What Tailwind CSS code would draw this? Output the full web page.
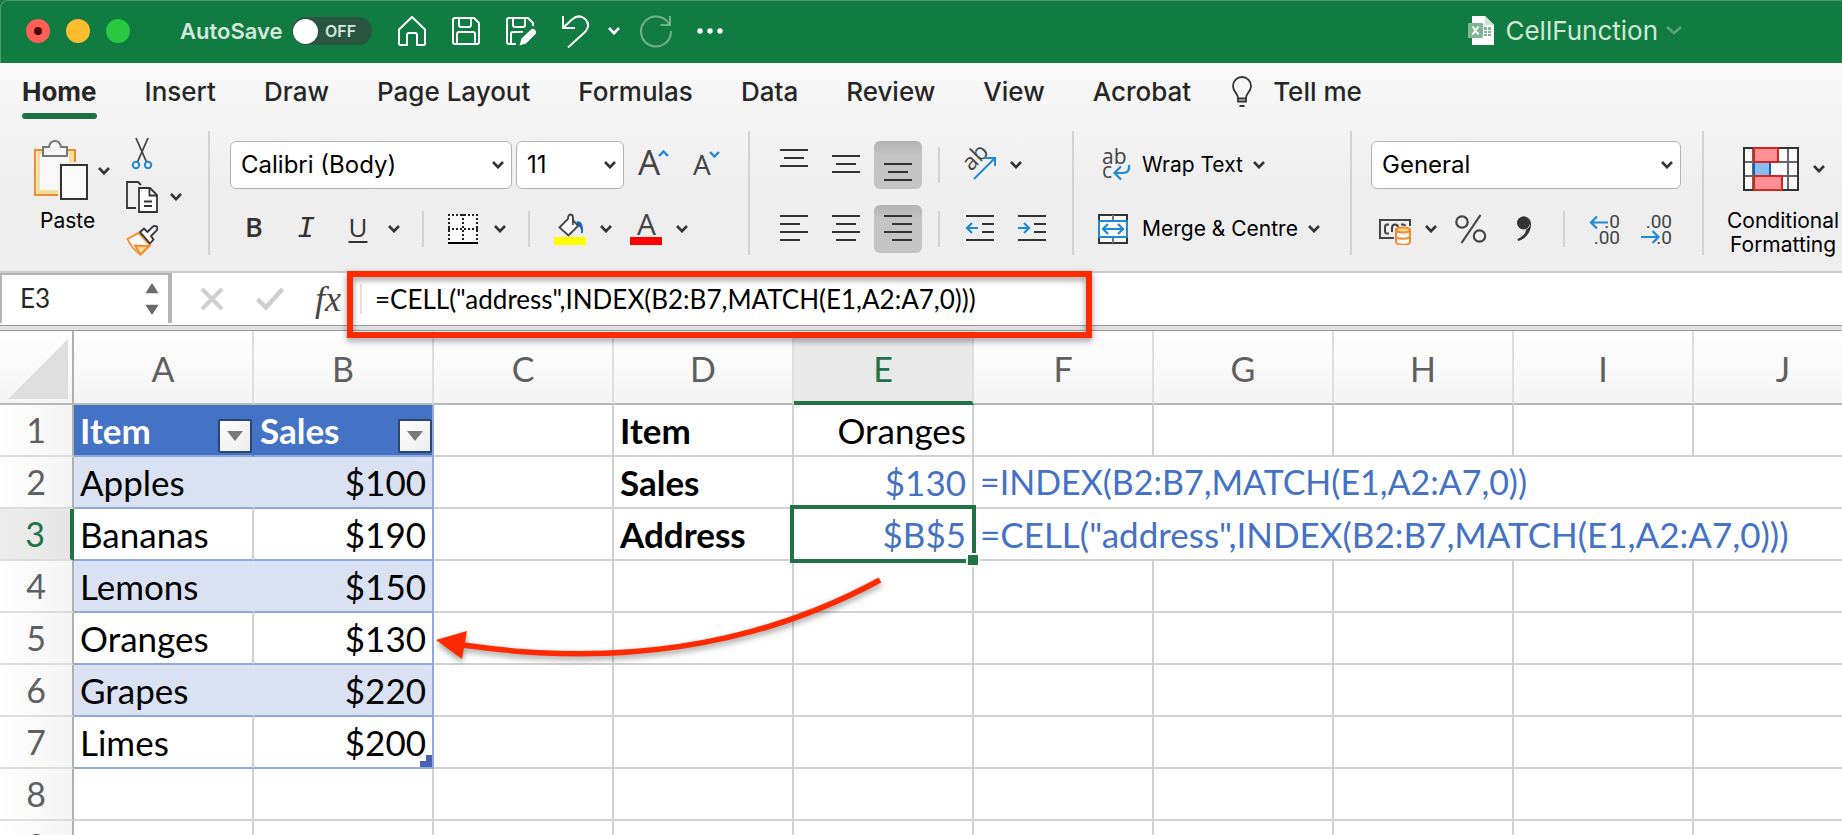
<!DOCTYPE html>
<html lang="en">
<head>
<meta charset="utf-8">
<title>CellFunction</title>
<script src="https://cdn.jsdelivr.net/npm/@tailwindcss/browser@4"></script>
</head>
<body class="flex h-screen flex-col overflow-hidden bg-white font-[Inter,sans-serif] text-[#262626]">

<svg class="hidden" aria-hidden="true">
  <symbol id="chev" viewBox="0 0 12 8"><path d="M1 1 6 6.2 11 1" fill="none" stroke="currentColor" stroke-width="2.6"/></symbol>
</svg>

<!-- Title bar -->
<header class="h-[63px] shrink-0 bg-[#107c41]">
  <div class="flex h-full items-center rounded-tl-lg border-t border-l border-[#4f9b70] pb-0.5 pl-[25px]">
    <div class="flex gap-4">
      <button aria-label="Close" class="flex size-6 items-center justify-center rounded-full bg-[#ff5f57]"><span class="size-2 rounded-full bg-[#4d0000]"></span></button>
      <button aria-label="Minimise" class="size-6 rounded-full bg-[#febc2e]"></button>
      <button aria-label="Zoom" class="size-6 rounded-full bg-[#28c840]"></button>
    </div>
    <label for="autosave" class="ml-[50px] w-[100px] text-[22px] leading-7 font-semibold whitespace-nowrap text-[#d6e8dd]">AutoSave</label>
    <button id="autosave" role="switch" aria-checked="false" class="ml-3 flex h-7 w-20 items-center gap-[7px] rounded-full bg-[#2a5540] px-px text-[16px] font-semibold text-[#d6e8dd]"><span class="size-[25px] rounded-full bg-white"></span>OFF</button>
    <div class="ml-6 flex items-center text-white">
      <button aria-label="Home"><svg class="h-8 w-8" viewBox="0 0 32 32" fill="none" stroke="currentColor" stroke-width="2"><path d="M3 14.5 16 2 29 14.500V28.500Q29 30 27.500 30H21V20q0-2-2-2h-6q-2 0-2 2v10H4.500Q3 30 3 28.500Z" stroke-linejoin="round"/></svg></button>
      <button aria-label="Save" class="ml-[22px]"><svg class="h-8 w-8" viewBox="0 0 32 32" fill="none" stroke="currentColor" stroke-width="2" stroke-linejoin="round"><path d="M5 3H24L29 8V27q0 2-2 2H5q-2 0-2-2V5q0-2 2-2ZM9 3v7q0 2 2 2h8q2 0 2-2V3M7 29V19q0-2 2-2h14q2 0 2 2v10"/></svg></button>
      <button aria-label="Save as" class="ml-[22px]"><svg class="h-8 w-8" viewBox="0 0 32 32" fill="none" stroke="currentColor" stroke-width="2" stroke-linejoin="round"><path d="M12 29H5q-2 0-2-2V5q0-2 2-2H24L29 8v3M9 3v7q0 2 2 2h8q2 0 2-2V3M7 29V19q0-2 2-2h10"/><path d="m15.500 30.500 2-7L27 14.500q2-1.500 4 .5t.5 4L22 28.500Z" fill="currentColor" stroke="none"/></svg></button>
      <button aria-label="Undo" class="ml-6"><svg class="h-9 w-8" viewBox="0 0 32 36" fill="none" stroke="currentColor" stroke-width="2"><path d="M3 3v12h12M3.500 14.500 12 6.500Q19 .5 25 6t.5 12.500L8 34.500"/></svg></button>
      <button aria-label="Undo history" class="ml-4"><svg class="h-2 w-3"><use href="#chev"/></svg></button>
      <button aria-label="Redo" class="ml-[18px] text-[#74b08d]"><svg class="h-9 w-9" viewBox="0 0 36 36" fill="none" stroke="currentColor" stroke-width="2"><path d="M32 3v9H22.500M31 11A15 15 0 1 0 33 18"/></svg></button>
      <button aria-label="More" class="ml-[22px]"><svg class="h-6 w-7" viewBox="0 0 28 24" fill="currentColor"><circle cx="4" cy="12" r="2.700"/><circle cx="14" cy="12" r="2.700"/><circle cx="24" cy="12" r="2.700"/></svg></button>
    </div>
    <div class="mr-[160px] ml-auto flex items-center">
      <svg class="h-[30px] w-[27px]" viewBox="0 0 27 30"><path d="M4 0h13l9 9v20H4Z" fill="#fff"/><path d="M17 0v9h9Z" fill="#cfe3d6"/><path d="M16 11h3v3h-3Zm4 0h3v3h-3Zm-4 4h3v2h-3Zm4 0h3v2h-3Zm-4 3h3v2h-3Zm4 0h3v2h-3Z" fill="#7fb596"/><rect y="7" width="15" height="15" rx="1" fill="#7db493"/><path d="m4.500 10.500 6 8m0-8-6 8" stroke="#fff" stroke-width="2"/></svg>
      <h1 class="ml-[10px] text-[26px] leading-8 text-[#d3e6da]">CellFunction</h1>
      <svg class="ml-2 h-3 w-4 text-[#5fa37d]" viewBox="0 0 16 12"><path d="m1 2 7 6 7-6" fill="none" stroke="currentColor" stroke-width="2.500"/></svg>
    </div>
  </div>
</header>

<!-- Ribbon -->
<div class="shrink-0 bg-linear-to-b from-[#f9f9f9] to-[#eeeeee] to-60%">
  <nav class="flex h-[68px] items-start gap-12 pt-[11px] pl-[22px] text-[26px] leading-9 font-medium whitespace-nowrap">
    <a href="#" class="font-bold"><span class="block">Home</span><span class="mt-[3px] block h-1.5 rounded-full bg-[#1e7145]"></span></a>
    <a href="#">Insert</a>
    <a href="#">Draw</a>
    <a href="#">Page Layout</a>
    <a href="#">Formulas</a>
    <a href="#">Data</a>
    <a href="#">Review</a>
    <a href="#">View</a>
    <a href="#">Acrobat</a>
    <a href="#" class="flex items-center gap-5"><svg class="-ml-2 h-8 w-[22px]" viewBox="0 0 22 32" fill="none" stroke="#333" stroke-width="1.800"><path d="M7 22c0-5-5-6-5-12a9 9 0 0 1 18 0c0 6-5 7-5 12v3.500H7ZM7 22.500h8M8.500 30h5"/></svg>Tell me</a>
  </nav>

  <div class="flex h-[140px] items-start text-black">
    <!-- Clipboard -->
    <section aria-label="Clipboard" class="flex h-[124px] w-[210px] shrink-0 border-r-2 border-[#d2d2d2]">
      <div class="ml-[34px] flex w-[78px] flex-col">
        <button class="mt-2 flex items-center gap-2.5 text-[#333]" aria-label="Paste">
          <svg class="h-[64px] w-[54px]" viewBox="0 0 54 64" fill="none"><path d="M3 12h38v45H3Z" fill="#fbdc95"/><path d="M6 15h29v36H6Z" fill="#f8f8f8"/><path d="M41 24V11H1v45h24" stroke="#f28b30" stroke-width="2"/><path d="M9 8h6q1-6 6-6t6 6h6v9H9Z" fill="#f6f6f6" stroke="#777" stroke-width="2"/><path d="M24 23h32v38H24Z" fill="#f0f0f0"/><path d="M27 26h26v34H27Z" fill="#fafafa" stroke="#333" stroke-width="2"/></svg>
          <svg class="h-2 w-3 shrink-0"><use href="#chev"/></svg>
        </button>
        <span class="ml-1.5 text-[21px] leading-9">Paste</span>
      </div>
      <div class="ml-3.5 flex flex-col gap-3 pt-1.5 text-[#333]">
        <button aria-label="Cut" class="w-8"><svg class="h-8 w-8" viewBox="0 0 32 32" fill="none" stroke-width="2"><path d="M10 1 20.500 25M22 1 11.500 25" stroke="#444" stroke-width="1.800"/><circle cx="10" cy="28" r="3.200" stroke="#1f8ad2"/><circle cx="22" cy="28" r="3.200" stroke="#1f8ad2"/></svg></button>
        <button aria-label="Copy" class="flex items-center gap-3"><svg class="h-8 w-8" viewBox="0 0 32 32" fill="none" stroke="#333" stroke-width="1.800"><path d="M10 27H1V1h11l3 3"/><path d="M13 7h11l7 7v17H13Z" fill="#fafafa"/><path d="M23.500 7v7.500H31M18 20.500h8M18 25h8"/></svg><svg class="h-2 w-3"><use href="#chev"/></svg></button>
        <button aria-label="Format painter" class="w-8"><svg class="h-8 w-8" viewBox="0 0 32 32" fill="none" stroke-width="1.800"><path d="m1.500 14 11-6L24 20.500 14.500 29.500Q6 24 1.500 14Z" fill="#fafafa" stroke="#f28b30"/><path d="M9 20.500 23 21l-8.500 8.500Z" fill="#fbdc95" stroke="#f28b30"/><path d="m14 7 4-3.500 3.500 3.500L27 1.500q2-1.200 3.500 0t.5 3.500l-6 6 2.500 3.500L24 18.500Z" fill="#fafafa" stroke="#333"/></svg></button>
      </div>
    </section>

    <!-- Font -->
    <section aria-label="Font" class="flex h-[124px] w-[540px] shrink-0 flex-col gap-4 border-r-2 border-[#d2d2d2] pt-2.5 pl-5 text-[#333]">
      <div class="flex h-12 items-center gap-1">
        <div class="relative w-[282px]">
          <select aria-label="Font name" class="h-12 w-full appearance-none rounded-md border border-[#b4b4b4] bg-white pl-2.5 text-[24px] text-black"><option>Calibri (Body)</option></select>
          <svg class="pointer-events-none absolute top-5 right-2 h-2 w-3"><use href="#chev"/></svg>
        </div>
        <div class="relative w-[108px]">
          <select aria-label="Font size" class="h-12 w-full appearance-none rounded-md border border-[#b4b4b4] bg-white pl-2.5 text-[24px] text-black"><option>11</option></select>
          <svg class="pointer-events-none absolute top-5 right-2 h-2 w-3"><use href="#chev"/></svg>
        </div>
        <button aria-label="Increase font size" class="ml-2"><svg class="h-12 w-9 overflow-visible" viewBox="0 0 36 48"><text x="2" y="34" font-family="Open Sans" font-size="35" fill="#444">A</text><path d="m23 15 4.500-4.500L32 15" fill="none" stroke="#1f8ad2" stroke-width="2.400"/></svg></button>
        <button aria-label="Decrease font size" class="ml-3.5"><svg class="h-12 w-9 overflow-visible" viewBox="0 0 36 48"><text x="3" y="34" font-family="Open Sans" font-size="28" fill="#444">A</text><path d="m20 11 4.500 4.500L29 11" fill="none" stroke="#1f8ad2" stroke-width="2.400"/></svg></button>
      </div>
      <div class="flex h-12 items-center pl-2">
        <button class="w-8 pb-1 font-['Open_Sans'] text-[27px] leading-8 font-semibold">B</button>
        <button class="ml-5 w-8 font-['Liberation_Mono'] text-[30px] leading-8 italic">I</button>
        <button class="ml-5 w-8 pb-1 font-['Open_Sans'] text-[26px] leading-8 underline decoration-2 underline-offset-4">U</button>
        <svg class="ml-3.5 h-2 w-3"><use href="#chev"/></svg>
        <div class="ml-[22px] h-9 w-0.5 bg-[#d2d2d2]"></div>
        <button aria-label="Borders" class="ml-6"><svg class="h-[30px] w-[30px]" viewBox="0 0 30 30" fill="none" stroke="#222" stroke-width="2"><path d="M0 0h30v28H0Z" fill="#fafafa" stroke="none"/><path d="M0 1h30M0 15h30M1 0v28M15 0v28M29 0v28" stroke-dasharray="2 2"/><path d="M0 29h30" stroke="#000"/></svg></button>
        <svg class="ml-4 h-2 w-3"><use href="#chev"/></svg>
        <div class="ml-[22px] h-9 w-0.5 bg-[#d2d2d2]"></div>
        <button aria-label="Fill colour" class="ml-6"><svg class="h-8 w-8" viewBox="0 0 32 32" fill="none"><path d="M22.500 8.500q7-2 6.500 11l-2 1q1-7-4-8Z" fill="#1565c0"/><path d="M5.500 14.500 14 6q0-4.500 2.500-4.500T19 5v2l5 6-9.500 9.500Z" fill="#fafafa" stroke="#444" stroke-width="1.800"/><path d="M19 5v7" stroke="#444" stroke-width="1.800"/><path d="M0 24h32v8H0Z" fill="#ff0"/></svg></button>
        <svg class="ml-3.5 h-2 w-3"><use href="#chev"/></svg>
        <button aria-label="Font colour" class="ml-[18px]"><svg class="h-8 w-8 overflow-visible" viewBox="0 0 32 32"><text x="7" y="22" font-family="Open Sans" font-size="30" fill="#444">A</text><path d="M0 24h32v8H0Z" fill="#f00"/></svg></button>
        <svg class="ml-3.5 h-2 w-3"><use href="#chev"/></svg>
      </div>
    </section>

    <!-- Alignment -->
    <section aria-label="Alignment" class="flex h-[124px] w-[324px] shrink-0 flex-col gap-4 border-r-2 border-[#d2d2d2] pt-2.5 pl-5 text-[#333]">
      <div class="flex h-12 items-center gap-1">
        <button aria-label="Top align" class="rounded-md"><svg class="size-12" viewBox="0 0 48 48" stroke="#333" stroke-width="2"><path d="M10 9h28M14 17h20M10 25h28"/></svg></button>
        <button aria-label="Middle align" class="rounded-md"><svg class="size-12" viewBox="0 0 48 48" stroke="#333" stroke-width="2"><path d="M10 15h28M14 23h20M10 31h28"/></svg></button>
        <button aria-label="Bottom align" aria-pressed="true" class="rounded-md bg-linear-to-b from-[#b2b2b2] to-[#c4c4c4] to-30%"><svg class="size-12" viewBox="0 0 48 48" stroke="#333" stroke-width="2"><path d="M10 23h28M14 31h20M10 39h28"/></svg></button>
        <div class="mx-3 h-9 w-0.5 bg-[#d2d2d2]"></div>
        <button aria-label="Orientation"><svg class="size-12 overflow-visible" viewBox="0 0 48 48"><text x="0" y="0" font-family="Open Sans" font-size="23" fill="#444" transform="translate(15 31) rotate(-45)">ab</text><path d="m18 38 20-20M28 17h11v8" fill="none" stroke="#1f8ad2" stroke-width="2"/></svg></button>
        <svg class="ml-0.5 h-2 w-3"><use href="#chev"/></svg>
      </div>
      <div class="flex h-12 items-center gap-1">
        <button aria-label="Align left" class="rounded-md"><svg class="size-12" viewBox="0 0 48 48" stroke="#333" stroke-width="2"><path d="M10 11h28M10 19h20M10 27h28M10 35h20"/></svg></button>
        <button aria-label="Centre" class="rounded-md"><svg class="size-12" viewBox="0 0 48 48" stroke="#333" stroke-width="2"><path d="M10 11h28M14 19h20M10 27h28M14 35h20"/></svg></button>
        <button aria-label="Align right" aria-pressed="true" class="rounded-md bg-linear-to-b from-[#b2b2b2] to-[#c4c4c4] to-30%"><svg class="size-12" viewBox="0 0 48 48" stroke="#333" stroke-width="2"><path d="M10 11h28M18 19h20M10 27h28M18 35h20"/></svg></button>
        <div class="mx-3 h-9 w-0.5 bg-[#d2d2d2]"></div>
        <button aria-label="Decrease indent"><svg class="size-12" viewBox="0 0 48 48" fill="none" stroke="#333" stroke-width="2"><path d="M10 11h28M26 19h12M26 27h12M10 35h28"/><path d="M22 23H11.500M16 18l-5 5 5 5" stroke="#1f8ad2" stroke-width="2.200"/></svg></button>
        <button aria-label="Increase indent"><svg class="size-12" viewBox="0 0 48 48" fill="none" stroke="#333" stroke-width="2"><path d="M10 11h28M26 19h12M26 27h12M10 35h28"/><path d="M10 23h10.500M16 18l5 5-5 5" stroke="#1f8ad2" stroke-width="2.200"/></svg></button>
      </div>
    </section>

    <!-- Wrap and merge -->
    <section aria-label="Wrap and merge" class="flex h-[124px] w-[278px] shrink-0 flex-col gap-4 border-r-2 border-[#d2d2d2] pt-2.5 pl-6 text-[21px] whitespace-nowrap">
      <button class="flex h-12 items-center"><svg class="mr-2.5 h-9 w-[34px] overflow-visible" viewBox="0 0 34 36"><text x="4" y="17" font-family="Open Sans" font-size="21" fill="#444">ab</text><text x="4" y="31" font-family="Open Sans" font-size="21" fill="#444">c</text><path d="M31 18q1 8-6 8h-8M23 19.500 16.500 26l6.500 6.500" fill="none" stroke="#1f8ad2" stroke-width="2.200"/></svg>Wrap Text<svg class="ml-2.5 h-2 w-3 text-[#333]"><use href="#chev"/></svg></button>
      <button class="flex h-12 items-center"><svg class="mr-3.5 h-[30px] w-[30px]" viewBox="0 0 30 30" fill="none" stroke="#333" stroke-width="2"><path d="M1 1h28v28H1Z" fill="#fafafa"/><path d="M15 1v28" stroke="#777"/><path d="M1 7h28v16H1Z" fill="#fafafa" stroke="#1f8ad2"/><path d="M5 15h20M10 10l-5 5 5 5M20 10l5 5-5 5" stroke="#1f8ad2" stroke-width="2.200"/></svg>Merge &amp; Centre<svg class="ml-2.5 h-2 w-3 text-[#333]"><use href="#chev"/></svg></button>
    </section>

    <!-- Number -->
    <section aria-label="Number" class="flex h-[124px] w-[352px] shrink-0 flex-col gap-4 border-r-2 border-[#d2d2d2] pt-2.5 pl-[19px] text-[#333]">
      <div class="relative w-[310px]">
        <select aria-label="Number format" class="h-12 w-full appearance-none rounded-md border border-[#b4b4b4] bg-white pl-2.5 text-[24px] text-black"><option>General</option></select>
        <svg class="pointer-events-none absolute top-5 right-2 h-2 w-3"><use href="#chev"/></svg>
      </div>
      <div class="flex h-12 items-center pl-2">
        <button aria-label="Currency"><svg class="h-8 w-8" viewBox="0 0 32 32" fill="none" stroke="#444" stroke-width="2"><path d="M15 25H1V7h30v6"/><path d="M10 11.500H8Q6 11.500 6 14v4q0 2.500 2 2.500h2M13 19v-4q0-3.500 3-3.500 2.500 0 3 2.500M22 11.500h2q2 0 2 1.500"/><path d="M17 17v12c0 3.500 14 3.500 14 0V17Z" fill="#fafafa" stroke="#f28b30"/><ellipse cx="24" cy="17" rx="7" ry="2.500" fill="#fbdc95" stroke="#f28b30"/><path d="M17 23c0 3.500 14 3.500 14 0" stroke="#f28b30"/></svg></button>
        <svg class="ml-3.5 h-2 w-3"><use href="#chev"/></svg>
        <button aria-label="Percent" class="ml-[18px]"><svg class="h-8 w-8" viewBox="0 0 32 32" fill="none" stroke="#444" stroke-width="2.200"><circle cx="7" cy="9" r="5.700"/><circle cx="24.500" cy="23" r="5.700"/><path d="M25.500 2 6.500 30"/></svg></button>
        <button aria-label="Comma style" class="ml-[26px]"><svg class="h-8 w-6" viewBox="0 0 24 32"><path d="M4 10a6.500 6.500 0 1 1 9 6.500C13 20 10 23.500 4.500 26l.5 2C14 25.500 18 18 18 11a7 7 0 1 0-14-1Z" fill="#333"/><circle cx="10.500" cy="10" r="6.500" fill="#333"/></svg></button>
        <div class="ml-[26px] h-9 w-0.5 bg-[#d2d2d2]"></div>
        <button aria-label="Increase decimal" class="ml-6"><svg class="h-8 w-[31px] overflow-visible" viewBox="0 0 31 32" font-family="Roboto" font-size="19" fill="#444"><text x="31" y="15" text-anchor="end">.0</text><text x="31" y="31" text-anchor="end">.00</text><path d="M19 9.500H2M8 3.500l-6 6 6 6" fill="none" stroke="#1f8ad2" stroke-width="2.200"/></svg></button>
        <button aria-label="Decrease decimal" class="ml-[21px]"><svg class="h-8 w-[31px] overflow-visible" viewBox="0 0 31 32" font-family="Roboto" font-size="19" fill="#444"><text x="31" y="15" text-anchor="end">.00</text><text x="31" y="31" text-anchor="end">.0</text><path d="M0 24h17M11.500 18l6 6-6 6" fill="none" stroke="#1f8ad2" stroke-width="2.200"/></svg></button>
      </div>
    </section>

    <!-- Styles -->
    <section aria-label="Styles" class="h-[124px] shrink-0 pt-4 pl-[23px]">
      <button class="flex flex-col text-[21px] leading-6">
        <span class="ml-4 flex items-center text-[#333]"><svg class="h-11 w-14" viewBox="0 0 56 44" fill="none" stroke-width="2"><path d="M1 1h54v42H1Z" fill="#fafafa"/><path d="M1 15h54M1 29h54M45 1v42M10 1v42" stroke="#666"/><path d="M1 1h54v42H1Z" stroke="#333"/><path d="M12 16h15v12H12Z" fill="#86bdec"/><path d="M11 15v14M27 15v14" stroke="#1060b8"/><path d="M11 1h24v14H11ZM11 29h28v14H11Z" fill="#ff9196" stroke="#d4271a"/></svg><svg class="ml-3.5 h-2 w-3"><use href="#chev"/></svg></span>
        <span class="mt-[18px] text-center whitespace-nowrap">Conditional<br>Formatting</span>
      </button>
    </section>
  </div>
</div>

<!-- Formula bar -->
<div class="relative flex h-[60px] shrink-0 flex-col border-t-2 border-[#cbcbcb] font-[Lato,sans-serif]">
  <div class="flex min-h-0 flex-1 items-start">
    <div class="flex h-[50px] w-[172px] shrink-0 items-center border-2 border-r-4 border-b-0 border-[#b4b4b4] pr-2">
      <input aria-label="Name box" value="E3" class="min-w-0 flex-1 bg-transparent pb-0.5 pl-[18px] text-[26px] text-[#262626]">
      <svg class="h-8 w-4" viewBox="0 0 14 34" fill="#6b6b6b"><path d="M0 11 7 0l7 11ZM0 23h14L7 34Z"/></svg>
    </div>
    <div class="flex h-[52px] items-center pl-7">
      <button aria-label="Cancel"><svg class="size-6" viewBox="0 0 24 24"><path d="m2 2 20 20M22 2 2 22" stroke="#cfcfcf" stroke-width="4"/></svg></button>
      <button aria-label="Enter" class="ml-8"><svg class="h-6 w-7" viewBox="0 0 28 24"><path d="m1.500 12 8.500 8.500L26.500 2" fill="none" stroke="#cfcfcf" stroke-width="4.500"/></svg></button>
      <button aria-label="Insert function" class="ml-7 w-9 text-left font-['Liberation_Serif'] text-[36px] leading-10 text-[#444] italic">&#8202;fx</button>
    </div>
    <div class="ml-3 flex h-[52px] flex-1 items-center">
      <div class="h-[30px] w-0.5 bg-[#e0e0e0]"></div>
      <input aria-label="Formula" value="=CELL(&quot;address&quot;,INDEX(B2:B7,MATCH(E1,A2:A7,0)))" class="h-10 min-w-0 flex-1 bg-transparent pl-[13px] text-[26px] text-black">
    </div>
  </div>
  <div class="h-1.5 shrink-0 border-y border-[#9a9a9a] bg-[#e2e2e2]"></div>
  <div class="pointer-events-none absolute -top-0.5 left-[347px] z-10 h-[67px] w-[745px] border-6 border-[#ff2a00] drop-shadow-[0_3px_3px_rgba(0,0,0,0.4)]"></div>
</div>

<!-- Sheet -->
<main class="relative min-h-0 flex-1 overflow-hidden font-[Lato,sans-serif]">
  <table class="w-[1874px] table-fixed border-separate border-spacing-0 text-[34px] leading-10 whitespace-nowrap text-black">
    <colgroup><col class="w-[74px]"><col span="10" class="w-[180px]"></colgroup>
    <thead class="[&_th]:border-b-2 [&_th]:p-0 [&_th]:font-normal [&_th]:text-[#5f5f5f]">
      <tr class="h-[74px] bg-linear-to-b from-white to-[#f4f4f4] [&_th]:border-r-2 [&_th]:border-r-[#dedede] [&_th]:border-b-[#b8b8b8] [&_th]:pt-[3px]">
        <th class="border-r-[#b0b0b0]!" aria-label="Select all"><svg class="ml-2 block h-15 w-15" viewBox="0 0 60 60"><path d="M60 0v60H0Z" fill="#dedede"/></svg></th>
        <th scope="col">A</th><th scope="col">B</th><th scope="col">C</th><th scope="col">D</th>
        <th scope="col" class="border-b-4! border-b-[#217346]! bg-[#e9e9e9] pt-1.5! text-[#217346]!">E</th>
        <th scope="col">F</th><th scope="col">G</th><th scope="col">H</th><th scope="col">I</th><th scope="col">J</th>
      </tr>
    </thead>
    <tbody class="[&_td]:border-r-2 [&_td]:border-b-2 [&_td]:border-[#d2d2d2] [&_td]:px-1.5 [&_td]:py-0 [&_td]:text-[35px] [&_th]:border-r-2 [&_th]:border-b-2 [&_th]:border-r-[#b0b0b0] [&_th]:border-b-[#dcdcdc] [&_th]:bg-linear-to-r [&_th]:from-white [&_th]:to-[#f4f4f4] [&_th]:p-0 [&_th]:font-normal [&_th]:text-[#5f5f5f] [&_tr]:h-[52px]">
      <tr><th scope="row">1</th>
        <td class="relative border-r-[#4472c4]! border-b-[#8ea9db]! bg-[#4472c4] font-bold text-white">Item<button aria-label="Filter Item" class="absolute right-0 bottom-0.5 flex size-[34px] items-center justify-center rounded-xs border-2 border-[#2a4674] bg-linear-to-br from-white to-[#ececec]"><svg class="h-2.5 w-4" viewBox="0 0 16 10"><path d="M0 0h16L8 10Z" fill="#7a7a7a"/></svg></button></td>
        <td class="relative border-[#8ea9db]! bg-[#4472c4] font-bold text-white">Sales<button aria-label="Filter Sales" class="absolute right-0 bottom-0.5 flex size-[34px] items-center justify-center rounded-xs border-2 border-[#2a4674] bg-linear-to-br from-white to-[#ececec]"><svg class="h-2.5 w-4" viewBox="0 0 16 10"><path d="M0 0h16L8 10Z" fill="#7a7a7a"/></svg></button></td>
        <td></td><td class="font-bold">Item</td><td class="text-right">Oranges</td><td></td><td></td><td></td><td></td><td></td></tr>
      <tr><th scope="row">2</th>
        <td class="border-r-[#d9e1f2]! border-b-[#8ea9db]! bg-[#d9e1f2]">Apples</td><td class="border-[#8ea9db]! bg-[#d9e1f2] text-right">$100</td>
        <td></td><td class="font-bold">Sales</td><td class="text-right text-[#4472c4]">$130</td><td colspan="5" class="text-[34px]! text-[#4472c4]">=INDEX(B2:B7,MATCH(E1,A2:A7,0))</td></tr>
      <tr><th scope="row" class="border-r-4! border-r-[#217346]! from-[#ececec]! to-[#e6e6e6]! text-[#217346]!">3</th>
        <td class="border-b-[#8ea9db]!">Bananas</td><td class="border-[#8ea9db]! text-right">$190</td>
        <td></td><td class="font-bold">Address</td>
        <td class="relative text-right text-[#4472c4]">$B$5<span class="absolute -inset-1 border-4 border-[#217346]"></span><span class="absolute -right-2 -bottom-2 size-[14px] border-2 border-white bg-[#217346]"></span></td>
        <td colspan="5" class="text-[#4472c4]">=CELL("address",INDEX(B2:B7,MATCH(E1,A2:A7,0)))</td></tr>
      <tr><th scope="row">4</th>
        <td class="border-r-[#d9e1f2]! border-b-[#8ea9db]! bg-[#d9e1f2]">Lemons</td><td class="border-[#8ea9db]! bg-[#d9e1f2] text-right">$150</td>
        <td></td><td></td><td></td><td></td><td></td><td></td><td></td><td></td></tr>
      <tr><th scope="row">5</th>
        <td class="border-b-[#8ea9db]!">Oranges</td><td class="border-[#8ea9db]! text-right">$130</td>
        <td></td><td></td><td></td><td></td><td></td><td></td><td></td><td></td></tr>
      <tr><th scope="row">6</th>
        <td class="border-r-[#d9e1f2]! border-b-[#8ea9db]! bg-[#d9e1f2]">Grapes</td><td class="border-[#8ea9db]! bg-[#d9e1f2] text-right">$220</td>
        <td></td><td></td><td></td><td></td><td></td><td></td><td></td><td></td></tr>
      <tr><th scope="row">7</th>
        <td class="border-b-[#8ea9db]!">Limes</td><td class="relative border-[#8ea9db]! text-right">$200<svg class="absolute right-0 bottom-0 size-3" viewBox="0 0 12 12"><path d="M6 0h6v12H0V6h6Z" fill="#4a5fb5"/></svg></td>
        <td></td><td></td><td></td><td></td><td></td><td></td><td></td><td></td></tr>
      <tr><th scope="row">8</th><td></td><td></td><td></td><td></td><td></td><td></td><td></td><td></td><td></td><td></td></tr>
      <tr><th scope="row">9</th><td></td><td></td><td></td><td></td><td></td><td></td><td></td><td></td><td></td><td></td></tr>
    </tbody>
  </table>
  <!-- Arrow from E3 to B5 -->
  <svg class="pointer-events-none absolute top-[239px] left-[430px] h-[110px] w-[460px] overflow-visible drop-shadow-[0_3px_3px_rgba(0,0,0,0.4)]" viewBox="430 570 460 110" fill="none"><path d="M880 580C760 645 620 668 463 645" stroke="#ff2a00" stroke-width="5.500"/><path d="m436 640 31-9-5 28Z" fill="#ff2a00"/></svg>
</main>
</body>
</html>
